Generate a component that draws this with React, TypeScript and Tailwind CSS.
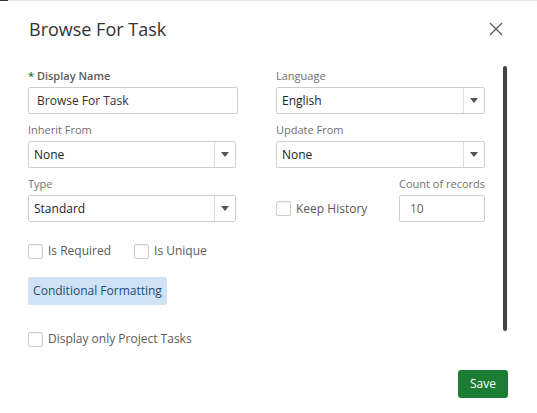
import React from 'react';

const Caret = () => (
  <svg width="8" height="5" viewBox="0 0 8 5" className="text-[#555]">
    <path d="M0 0h8L4 5z" fill="currentColor" />
  </svg>
);

const Select = ({ value, width }: { value: string; width: string }) => (
  <div className={`flex h-[27px] ${width} items-stretch rounded-[2px] border border-[#cfcfcf] bg-white`}>
    <div className="flex flex-1 items-center pl-[5px] text-[12px] text-[#222]">{value}</div>
    <div className="flex w-[21px] items-center justify-center border-l border-[#dcdcdc]">
      <Caret />
    </div>
  </div>
);

const Label = ({ children, right }: { children: React.ReactNode; right?: boolean }) => (
  <div
    className={`mb-[3px] h-[16px] whitespace-nowrap text-[11px] leading-[16px] text-[#707070] ${right ? 'text-right' : ''}`}
  >
    {children}
  </div>
);

const Checkbox = ({ label }: { label: string }) => (
  <label className="flex items-center gap-[5px] whitespace-nowrap text-[12px] leading-[16px] text-[#5a5a5a]">
    <span className="h-[15px] w-[15px] rounded-[2px] border border-[#cdcdcd] bg-white shadow-[inset_0_1px_1px_rgba(0,0,0,0.05)]" />
    {label}
  </label>
);

export default function App() {
  return (
    <div
      className="relative h-[413px] w-[537px] overflow-hidden bg-white"
      style={{ fontFamily: '"Open Sans", "Noto Sans", sans-serif' }}
    >
      <div className="flex h-px w-full bg-[#e2e2e2]">
        <div className="h-px w-[8px] bg-[#333]" />
      </div>

      <div className="flex items-center justify-between pl-[29px] pr-[34px] pt-[15px]">
        <h1 className="text-[18px] leading-[26px] text-[#333]">Browse For Task</h1>
        <svg width="14" height="14" viewBox="0 0 14 14" className="text-[#555]">
          <path d="M1 1l12 12M13 1L1 13" stroke="currentColor" strokeWidth="1.2" />
        </svg>
      </div>

      <div className="pl-[28px] pt-[26px]">
        <div className="grid grid-cols-[210px_209px] gap-x-[38px] gap-y-[8px]">
          <div>
            <div className="mb-[3px] h-[16px] text-[11px] font-semibold leading-[16px] text-[#5c5c5c]">
              <span className="text-[#1b7c34]">*</span> Display Name
            </div>
            <div className="flex h-[27px] w-[210px] items-center rounded-[2px] border border-[#cfcfcf] pl-[8px] text-[12px] text-[#333]">
              Browse For Task
            </div>
          </div>
          <div>
            <Label>Language</Label>
            <Select value="English" width="w-[209px]" />
          </div>

          <div>
            <Label>Inherit From</Label>
            <Select value="None" width="w-[208px]" />
          </div>
          <div>
            <Label>Update From</Label>
            <Select value="None" width="w-[209px]" />
          </div>

          <div>
            <Label>Type</Label>
            <Select value="Standard" width="w-[208px]" />
          </div>
          <div className="flex items-end justify-between">
            <div className="flex h-[27px] items-center">
              <Checkbox label="Keep History" />
            </div>
            <div className="w-[86px]">
              <Label right>Count of records</Label>
              <div className="flex h-[27px] items-center rounded-[2px] border border-[#cfcfcf] pl-[10px] text-[12px] text-[#666]">
                10
              </div>
            </div>
          </div>
        </div>

        <div className="mt-[21px] flex gap-[23px]">
          <Checkbox label="Is Required" />
          <Checkbox label="Is Unique" />
        </div>

        <button className="mt-[18px] flex h-[28px] w-[139px] items-center justify-center whitespace-nowrap rounded-[2px] bg-[#cfe2f6] text-[12px] text-[#1f4b73]">
          Conditional Formatting
        </button>

        <div className="mt-[26px]">
          <Checkbox label="Display only Project Tasks" />
        </div>
      </div>

      <div className="absolute left-[503px] top-[66px] h-[265px] w-[4px] rounded-full bg-[#444]" />

      <div className="mt-[23px] flex justify-end pr-[29px]">
        <button className="flex h-[28px] w-[50px] items-center justify-center rounded-[3px] bg-[#1b7c34] text-[12px] text-white">
          Save
        </button>
      </div>
    </div>
  );
}
